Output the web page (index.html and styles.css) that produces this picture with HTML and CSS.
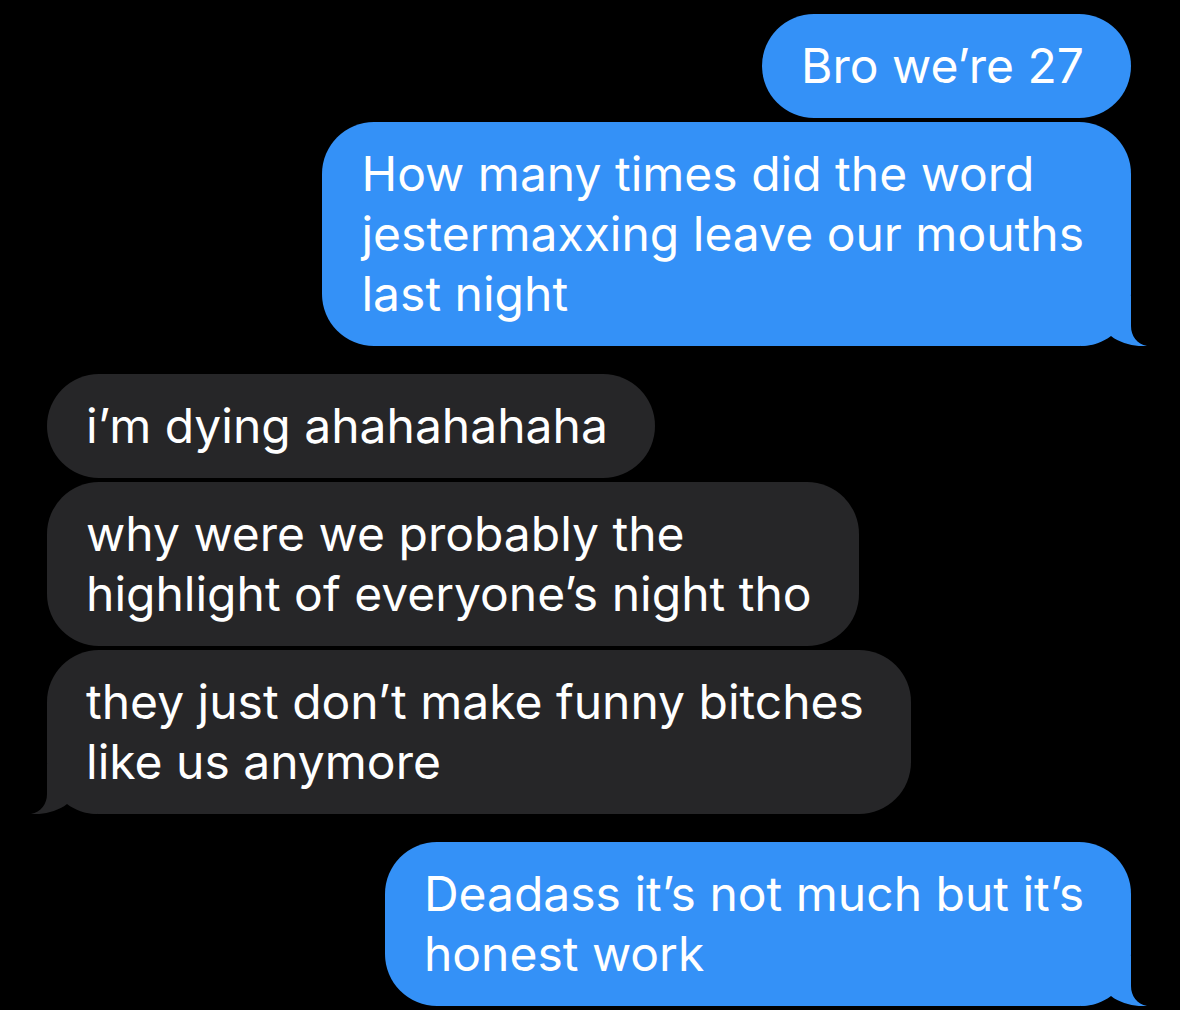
FILE: index.html
```html
<!DOCTYPE html>
<html>
<head>
<meta charset="utf-8">
<link rel="stylesheet" href="styles.css">
</head>
<body>
<main class="thread">
  <div class="group me">
    <div class="bubble">Bro we’re 27</div>
    <div class="bubble tail">How many times did the word<br>jestermaxxing leave our mouths<br>last night<svg class="tail-shape" viewBox="0 0 66 50" width="66" height="50"><path d="M50,0 L50,30 C50,40 56,48 66,50 C56,51 40,48 30,40 C22,46 12,50 0,50 L0,0 Z"/></svg></div>
  </div>
  <div class="group them">
    <div class="bubble">i’m dying ahahahahaha</div>
    <div class="bubble">why were we probably the<br>highlight of everyone’s night tho</div>
    <div class="bubble tail">they just don’t make funny bitches<br>like us anymore<svg class="tail-shape" viewBox="0 0 66 50" width="66" height="50"><path d="M50,0 L50,30 C50,40 56,48 66,50 C56,51 40,48 30,40 C22,46 12,50 0,50 L0,0 Z"/></svg></div>
  </div>
  <div class="group me">
    <div class="bubble tail">Deadass it’s not much but it’s<br>honest work<svg class="tail-shape" viewBox="0 0 66 50" width="66" height="50"><path d="M50,0 L50,30 C50,40 56,48 66,50 C56,51 40,48 30,40 C22,46 12,50 0,50 L0,0 Z"/></svg></div>
  </div>
</main>
</body>
</html>
```

FILE: styles.css
```css
html, body {
  margin: 0;
  background: #000;
}
body {
  width: 1180px;
  height: 1010px;
  overflow: hidden;
  font-family: Inter, "Noto Sans", sans-serif;
}
.thread {
  display: flex;
  flex-direction: column;
  gap: 28px;
  padding: 14px 49px 0 47px;
}
.group {
  display: flex;
  flex-direction: column;
  gap: 4px;
}
.group.me { align-items: flex-end; }
.group.them { align-items: flex-start; }
.bubble {
  position: relative;
  z-index: 0;
  font-size: 48px;
  line-height: 60px;
  color: #fff;
  padding: 22px 47px 22px 39px;
  border-radius: 52px;
}
.me .bubble { background: #3491f7; }
.them .bubble { background: #262628; }
.tail-shape {
  position: absolute;
  z-index: -1;
  bottom: 0;
  right: -16px;
}
.me .tail-shape { fill: #3491f7; }
.them .tail-shape {
  fill: #262628;
  right: auto;
  left: -16px;
  transform: scaleX(-1);
}
```
